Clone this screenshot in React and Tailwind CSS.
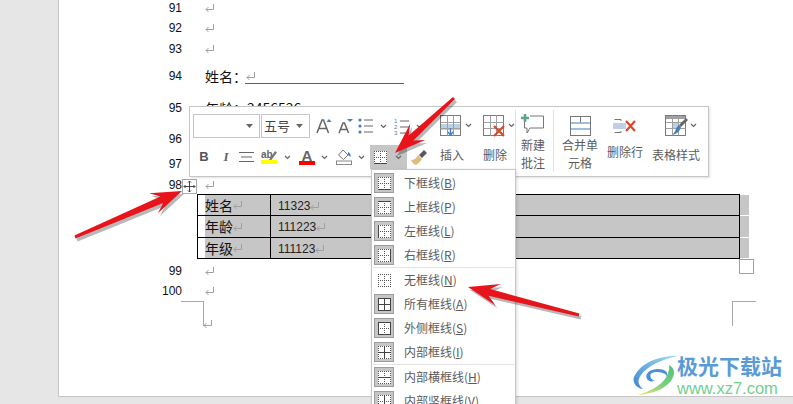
import React from 'react';

const cjk = '"Noto Sans CJK SC", "Liberation Sans", sans-serif';

const Ret = ({ className = '' }) => (
  <svg width="10" height="10" viewBox="0 0 10 10" fill="none" stroke="#a0a0a0" className={`shrink-0 ${className}`}>
    <path d="M8.500 1v5.500H1M3.500 4L1 6.500 3.500 9" />
  </svg>
);

const Chevron = ({ className = '' }) => (
  <svg width="7" height="5" viewBox="0 0 7 5" fill="none" stroke="#666" strokeWidth="1.2" className={className}>
    <path d="M1 1l2.500 2.500L6 1" />
  </svg>
);

const Caret = () => (
  <svg width="7" height="4" viewBox="0 0 7 4" fill="#666">
    <path d="M0 0h7L3.500 4z" />
  </svg>
);

const BorderGlyph = ({ solid = [] }) => {
  const lines = {
    top: 'M0 .5h13',
    bottom: 'M0 12.5h13',
    left: 'M.5 0v13',
    right: 'M12.5 0v13',
    h: 'M0 6.5h13',
    v: 'M6.5 0v13',
  };
  return (
    <svg width="13" height="13" viewBox="0 0 13 13" fill="none" className="bg-white">
      {Object.keys(lines).map((k) =>
        solid.includes(k) ? (
          <path key={k} d={lines[k]} stroke="#444" />
        ) : (
          <path key={k} d={lines[k]} stroke="#555" strokeDasharray="1 1" />
        )
      )}
    </svg>
  );
};

const menuItems = [
  { label: '下框线', key: 'B', solid: ['bottom'] },
  { label: '上框线', key: 'P', solid: ['top'] },
  { label: '左框线', key: 'L', solid: ['left'] },
  { label: '右框线', key: 'R', solid: ['right'] },
  { sep: true },
  { label: '无框线', key: 'N', solid: [], plain: true },
  { label: '所有框线', key: 'A', solid: ['top', 'bottom', 'left', 'right', 'h', 'v'] },
  { label: '外侧框线', key: 'S', solid: ['top', 'bottom', 'left', 'right'] },
  { label: '内部框线', key: 'I', solid: ['h', 'v'] },
  { sep: true },
  { label: '内部横框线', key: 'H', solid: ['h'] },
  { label: '内部竖框线', key: 'V', solid: ['v'] },
];

const BorderMenu = () => (
  <div className="absolute left-[371px] top-[169px] w-[145px] h-[240px] bg-white border border-[#c6c6c6] pt-[1px] shadow-[1px_1px_3px_rgba(0,0,0,0.15)]">
    {menuItems.map((item, i) =>
      item.sep ? (
        <div key={i} className="h-[1px] mx-[1px] bg-[#e2e2e2]" />
      ) : (
        <div key={i} className="h-[24px] flex items-center pl-[2px]">
          <div
            className={
              item.plain
                ? 'w-[20px] h-[20px] flex items-center justify-center'
                : 'w-[20px] h-[20px] flex items-center justify-center border border-[#9c9c9c] bg-[#c6c6c6]'
            }
          >
            <BorderGlyph solid={item.solid} />
          </div>
          <span className="ml-[10px] text-[12px] text-[#5c5c5c]" style={{ fontFamily: cjk }}>
            {item.label}(<span className="underline">{item.key}</span>)
          </span>
        </div>
      )
    )}
  </div>
);

const Combo = ({ w, text }) => (
  <div className={`${w} h-[24px] border border-[#c6c6c6] flex items-center justify-between pl-[2px] pr-[6px] text-[13px] text-[#444]`}>
    <span>{text}</span>
    <Caret />
  </div>
);

const GrowFont = ({ up }) => (
  <svg width="17" height="16" viewBox="0 0 17 16" fill="none">
    <path d={up ? 'M1 15L6 2h1.500l5 13M3 10.500h7.500' : 'M1 15L5 5h1.500l4 10M2.800 11.500h5.500'} stroke="#666" strokeWidth="1.5" />
    <path d={up ? 'M10.500 4l2.500-3 2.500 3z' : 'M9 1h6l-3 3z'} fill="#4a7ebb" />
  </svg>
);

const Bullets = () => (
  <svg width="15" height="16" viewBox="0 0 15 16" fill="none">
    <g fill="#4a7ebb">
      <circle cx="2" cy="2" r="1.6" />
      <circle cx="2" cy="8" r="1.6" />
      <circle cx="2" cy="14" r="1.6" />
    </g>
    <path d="M6 2h9M6 8h9M6 14h9" stroke="#666" />
  </svg>
);

const NumList = () => (
  <svg width="15" height="17" viewBox="0 0 15 17" fill="none">
    <g fill="#4a7ebb" fontSize="6" fontFamily="Liberation Sans, sans-serif">
      <text x="0" y="5">1</text>
      <text x="0" y="11">2</text>
      <text x="0" y="17">3</text>
    </g>
    <path d="M6 3h9M6 9h9M6 15h9" stroke="#666" />
  </svg>
);

const Highlight = () => (
  <div className="w-[16px] h-[16px] relative">
    <span className="absolute left-0 top-[-2px] text-[10px] font-bold text-[#666]" style={{ fontFamily: '"Liberation Sans", sans-serif' }}>ab</span>
    <svg width="16" height="12" viewBox="0 0 16 12" className="absolute left-0 top-0">
      <path d="M8 11l6-9 2 1.500-6 8z" fill="#777" />
    </svg>
    <div className="absolute left-0 right-0 top-[11px] h-[4px] bg-[#ffff00]" />
  </div>
);

const FontColor = () => (
  <div className="w-[16px] h-[16px] relative flex justify-center">
    <span className="text-[15px] leading-[14px] font-bold text-[#666]" style={{ fontFamily: '"Liberation Sans", sans-serif' }}>A</span>
    <div className="absolute left-0 right-0 top-[12px] h-[4px] bg-[#ff0000]" />
  </div>
);

const Bucket = () => (
  <svg width="16" height="16" viewBox="0 0 16 16" fill="none">
    <path d="M7 1l5 5-4.500 4.500-5-4.500z" fill="#fff" stroke="#777" />
    <path d="M12 3c2 1 3 2.500 2.500 5L12 6z" fill="#4a7ebb" />
    <rect x=".5" y="12" width="15" height="3.500" fill="#fff" stroke="#888" />
  </svg>
);

const Brush = () => (
  <svg width="18" height="17" viewBox="0 0 18 17">
    <path d="M1 11c3 0 6-2 7-5l4 4c-2 3-4 5-6 6-2-.5-4-2.500-5-5z" fill="#e0bb7e" />
    <path d="M9 6l5-5 3 3-5 5z" fill="#5a5a5a" />
  </svg>
);

const Sep = ({ className = '' }) => <div className={`w-[1px] bg-[#e2e2e2] ${className}`} />;

const TableGrid = () => (
  <g stroke="#7a7a7a" fill="none">
    <rect x=".5" y=".5" width="20" height="20" />
    <path d="M7.500.5v20M13.500.5v20M.5 7.500h20M.5 13.500h20" stroke="#a0a0a0" />
  </g>
);

const InsertIcon = () => (
  <svg width="22" height="22" viewBox="0 0 22 22">
    <rect x="1" y="9" width="19" height="6" fill="#bcd0e6" />
    <TableGrid />
    <path d="M10.500 13v6M8 17l2.500 3 2.500-3" fill="none" stroke="#3f7cc0" strokeWidth="1.300" />
  </svg>
);

const DeleteIcon = () => (
  <svg width="24" height="22" viewBox="0 0 24 22">
    <TableGrid />
    <path d="M11 11l10 10M21 11L11 21" stroke="#d8482a" strokeWidth="2.200" />
  </svg>
);

const CommentIcon = () => (
  <svg width="24" height="22" viewBox="0 0 24 22" fill="none">
    <path d="M9 3h13.500v12H9l-3 5v-5H3.500V9" stroke="#777" />
    <path d="M4 1v8M0 5h8" stroke="#5fa58c" strokeWidth="2.600" />
  </svg>
);

const MergeIcon = () => (
  <svg width="21" height="20" viewBox="0 0 21 20" fill="none">
    <rect x=".5" y=".5" width="20" height="19" stroke="#777" />
    <path d="M10.500.5v6" stroke="#777" />
    <path d="M.5 7h20M.5 13h20" stroke="#3f7cc0" />
  </svg>
);

const DeleteRowIcon = () => (
  <svg width="24" height="14" viewBox="0 0 24 14" fill="none">
    <path d="M6 .500H1.500M6 13.500H1.500M6 .500H8V2M6 13.500H8V12" stroke="#777" />
    <rect x="0" y="4" width="13" height="6" fill="#bcd0e6" />
    <path d="M13 2l9 10M22 2l-9 10" stroke="#d8482a" strokeWidth="2.200" />
  </svg>
);

const TableStyleIcon = () => (
  <svg width="24" height="22" viewBox="0 0 24 22">
    <rect x="7" y="7" width="7" height="7" fill="#bcd0e6" />
    <rect x="1" y="1" width="19" height="3" fill="#a0a0a0" />
    <TableGrid />
    <path d="M23 5l-2-2-7 7 2 2z" fill="#666" />
    <path d="M14 10l2 2c-1 4-4 7-9 8 2-2 3-3 3.500-5 .5-2 2-4 3.500-5z" fill="#4a7ebb" />
  </svg>
);

const Label = ({ children, className = '' }) => (
  <div className={`text-[12px] leading-[18px] text-[#5c5c5c] text-center ${className}`} style={{ fontFamily: cjk }}>
    {children}
  </div>
);

const Toolbar = () => (
  <div
    className="absolute left-[189px] top-[106px] w-[520px] h-[71px] bg-white border border-[#c6c6c6] shadow-[1px_1px_2px_rgba(0,0,0,0.12)] flex"
    style={{ fontFamily: cjk }}
  >
    <div className="w-[240px] shrink-0 pl-[3px] pt-[7px]">
      <div className="flex items-center h-[24px]">
        <Combo w="w-[67px]" text="" />
        <div className="w-[1px]" />
        <Combo w="w-[49px]" text="五号" />
        <div className="ml-[6px]"><GrowFont up /></div>
        <div className="ml-[5px]"><GrowFont /></div>
        <div className="ml-[3px]"><Bullets /></div>
        <Chevron className="ml-[7px]" />
        <div className="ml-[7px]"><NumList /></div>
        <Chevron className="ml-[7px]" />
      </div>
      <div className="flex items-center h-[24px] mt-[7px]">
        <span className="w-[20px] ml-[1px] text-center text-[13px] font-bold text-[#555]" style={{ fontFamily: '"Liberation Sans", sans-serif' }}>B</span>
        <span className="w-[24px] text-center text-[13px] italic font-bold text-[#666]" style={{ fontFamily: '"Liberation Serif", serif' }}>I</span>
        <svg width="15" height="12" viewBox="0 0 15 12" className="ml-[1px]" stroke="#666">
          <path d="M0 1.500h15M2 6h11M0 10.500h15" />
        </svg>
        <div className="ml-[7px]"><Highlight /></div>
        <Chevron className="ml-[7px]" />
        <div className="ml-[8px]"><FontColor /></div>
        <Chevron className="ml-[6px]" />
        <div className="ml-[8px]"><Bucket /></div>
        <Chevron className="ml-[6px]" />
        <div className="ml-[5px] w-[37px] h-[24px] bg-[#c6c6c6] flex items-center pl-[4px]">
          <BorderGlyph solid={['bottom']} />
          <Chevron className="ml-[8px]" />
        </div>
        <div className="ml-[3px]"><Brush /></div>
      </div>
    </div>

    <div className="w-[42px] pt-[7px] pl-[10px] flex flex-col">
      <div className="flex items-center h-[23px]">
        <InsertIcon />
        <Chevron className="ml-[3px]" />
      </div>
      <Label className="mt-[9px] w-[24px]">插入</Label>
    </div>
    <div className="w-[43px] pt-[7px] pl-[11px] flex flex-col">
      <div className="flex items-center h-[23px]">
        <DeleteIcon />
        <Chevron className="ml-[1px]" />
      </div>
      <Label className="mt-[9px] w-[24px]">删除</Label>
    </div>
    <Sep className="h-[60px] mt-[3px]" />
    <div className="w-[37px] pt-[6px] pr-[3px] flex flex-col items-center">
      <CommentIcon />
      <Label className="mt-[1px]">新建<br />批注</Label>
    </div>
    <Sep className="h-[62px] mt-[3px]" />
    <div className="w-[52px] pt-[9px] flex flex-col items-center">
      <MergeIcon />
      <Label className="mt-[0px]">合并单<br />元格</Label>
    </div>
    <div className="w-[38px] pt-[12px] flex flex-col items-center">
      <DeleteRowIcon />
      <Label className="mt-[10px] whitespace-nowrap">删除行</Label>
    </div>
    <div className="w-[64px] pt-[7px] flex flex-col items-center">
      <div className="flex items-center h-[23px] ml-[10px]">
        <TableStyleIcon />
        <Chevron className="ml-[1px]" />
      </div>
      <Label className="mt-[9px] whitespace-nowrap">表格样式</Label>
    </div>
  </div>
);

const DocLine = ({ num, h, children }) => (
  <div className={`${h} flex items-center`}>
    <div className="w-[123px] text-right text-[12px] text-[#111]" style={{ fontFamily: '"Liberation Sans", sans-serif' }}>
      {num}
    </div>
    <div className="ml-[23px] flex items-center">{children}</div>
  </div>
);

const rows = [
  ['姓名', '11323', 'h-[21px]'],
  ['年龄', '111223', 'h-[22px]'],
  ['年级', '111123', 'h-[21px]'],
];

const DocTable = () => (
  <div className="ml-[138px] flex relative">
    <div className="w-[543px] border-x border-t border-black flex flex-col">
      {rows.map(([a, b, h]) => (
        <div key={a} className={`${h} flex border-b border-black`}>
          <div className="w-[73px] border-r border-black pl-[7px] flex">
            <div className="flex-1 bg-[#c6c6c6] flex items-center text-[14px] text-[#111]" style={{ fontFamily: cjk }}>
              {a}
              <Ret />
            </div>
          </div>
          <div className="flex-1 bg-[#c6c6c6] pl-[7px] pt-[1px] flex items-center text-[12px] text-[#222]" style={{ fontFamily: '"Liberation Sans", sans-serif' }}>
            {b}
            <Ret />
          </div>
        </div>
      ))}
    </div>
    <div className="w-[9px] flex flex-col gap-[1px] pt-[1px]">
      <div className="h-[20px] bg-[#c6c6c6]" />
      <div className="h-[21px] bg-[#c6c6c6]" />
      <div className="h-[20px] bg-[#c6c6c6]" />
    </div>
    <div className="absolute left-[542px] top-[65px] w-[15px] h-[15px] bg-white border border-[#a0a0a0]" />
    <div className="absolute left-[-15px] top-[-15px] w-[15px] h-[15px] bg-white border border-[#a8a8a8] flex items-center justify-center">
      <svg width="13" height="13" viewBox="0 0 13 13" fill="none" stroke="#444">
        <path d="M6.500 1v11M1 6.500h11M5 2.500L6.500 1 8 2.500M5 10.500L6.500 12 8 10.500M2.500 5L1 6.500 2.500 8M10.500 5L12 6.500 10.500 8" />
      </svg>
    </div>
  </div>
);

const Arrow = ({ from, to }) => {
  const dx = to[0] - from[0];
  const dy = to[1] - from[1];
  const len = Math.hypot(dx, dy);
  const ux = dx / len;
  const uy = dy / len;
  const at = (back, side) => `${to[0] - ux * back - uy * side},${to[1] - uy * back + ux * side}`;
  const pts = [
    at(len, 1.5),
    at(22, 3.5),
    at(31, 11),
    at(0, 0),
    at(31, -11),
    at(22, -3.5),
    at(len, -1.5),
  ].join(' ');
  return (
    <g>
      <polygon points={pts} fill="#000" opacity="0.28" transform="translate(2 3)" />
      <polygon points={pts} fill="#e8141c" />
    </g>
  );
};

const Watermark = () => (
  <div className="absolute left-[633px] top-[352px] flex">
    <svg width="46" height="44" viewBox="0 0 46 44" className="mt-[1px]">
      <defs>
        <linearGradient id="wmBlue" x1="0" y1="1" x2="1" y2="0">
          <stop offset="0" stopColor="#3f84cf" />
          <stop offset="1" stopColor="#9fe0f5" />
        </linearGradient>
        <linearGradient id="wmGreen" x1="0" y1="1" x2="1" y2="0">
          <stop offset="0" stopColor="#f2ea6a" />
          <stop offset="0.5" stopColor="#7fd07e" />
          <stop offset="1" stopColor="#4fbf85" />
        </linearGradient>
      </defs>
      <path d="M45 3C30 2 8 8 1 24c-2 6 3 11 9 12-5-4-6-8-2-14C14 13 30 6 45 3z" fill="url(#wmBlue)" />
      <path d="M14 26c-3-6 4-10 11-10 7 0 10 3 9 7-2-3-6-4-10-4-5 0-8 2-6 6 1 2 3 3 5 2-3 2-7 2-9-1z" fill="#4d8fd6" />
      <path d="M36 12c6 3 7 10 1 17C31 36 20 41 4 42c12-3 23-9 28-16 3-5 5-10 4-14z" fill="url(#wmGreen)" />
    </svg>
    <div className="ml-[-2px] flex flex-col">
      <div className="text-[21px] leading-[26px] font-bold text-[#5b9bd5]" style={{ fontFamily: cjk }}>极光下载站</div>
      <div className="mt-[2px] text-[16.5px] leading-[16px] text-[#72cf8e]" style={{ fontFamily: '"Liberation Sans", sans-serif' }}>www.xz7.com</div>
    </div>
  </div>
);

const App = () => {
  return (
    <div className="relative w-[793px] h-[404px] overflow-hidden bg-[#e6e6e6]">
      <div className="ml-[58px] h-[397px] bg-white border-l border-b border-[#c6c6c6] flex flex-col">
        <DocLine num="91" h="h-[16px]"><Ret /></DocLine>
        <DocLine num="92" h="h-[24px]"><Ret /></DocLine>
        <DocLine num="93" h="h-[18px]"><Ret /></DocLine>
        <DocLine num="94" h="h-[36px]">
          <span className="text-[14px] text-[#111]" style={{ fontFamily: cjk }}>姓名：</span>
          <div className="relative flex items-center ml-[-2px]">
            <Ret className="ml-[1px]" />
            <div className="absolute left-0 top-[12px] w-[159px] h-[1px] bg-[#4a628f]" />
          </div>
        </DocLine>
        <DocLine num="95" h="h-[28px]">
          <span className="text-[14px] text-[#111]" style={{ fontFamily: cjk }}>年龄：2456526</span>
        </DocLine>
        <DocLine num="96" h="h-[34px]" />
        <DocLine num="97" h="h-[16px]" />
        <DocLine num="98" h="h-[22px] pt-[4px]"><Ret /></DocLine>
        <DocTable />
        <DocLine num="99" h="h-[24px]"><Ret /></DocLine>
        <DocLine num="100" h="h-[16px]"><Ret /></DocLine>
        <div className="flex justify-between mt-[2px] ml-[122px] mr-[2px]">
          <div className="w-[23px] h-[25px] border-t border-r border-[#a8a8a8] relative">
            <Ret className="absolute left-[22px] top-[17px]" />
          </div>
          <div className="w-[24px] h-[25px] border-t border-l border-[#a8a8a8] mr-[35px]" />
        </div>
      </div>
      <Toolbar />
      <BorderMenu />
      <svg width="793" height="404" className="absolute left-0 top-0 pointer-events-none">
        <Arrow from={[454, 98]} to={[395, 153]} />
        <Arrow from={[75, 237]} to={[182, 191]} />
        <Arrow from={[579, 315]} to={[468, 287]} />
      </svg>
      <Watermark />
    </div>
  );
};

export default App;
